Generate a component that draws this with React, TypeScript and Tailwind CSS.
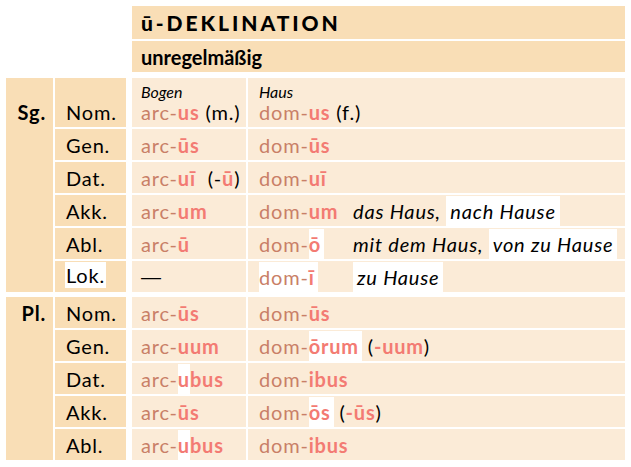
import React from 'react';

// colours from the reference
const hd = 'bg-[#f9deb6]';
const bd = 'bg-[#fbebd7]';

type Row = {
  c: string;
  a: React.ReactNode;
  b: React.ReactNode;
  g?: React.ReactNode;
};

const Stem = ({ s, e, hl }: { s: string; e: React.ReactNode; hl?: boolean }) => (
  <span>
    <span className="text-[#c97f67]">{s}</span>
    <span className={`font-bold text-[#f37b73] ${hl ? 'bg-white pr-[3px] py-[3px]' : ''}`}>{e}</span>
  </span>
);

const W = ({ children }: { children: React.ReactNode }) => <span className="bg-white px-[4px] py-[3px]">{children}</span>;
const Red = ({ children }: { children: React.ReactNode }) => <span className="font-bold text-[#f37b73]">{children}</span>;

const sg: Row[] = [
  { c: 'Nom.', a: <><Stem s="arc-" e="us" /> (m.)</>, b: <><Stem s="dom-" e="us" /> (f.)</> },
  { c: 'Gen.', a: <Stem s="arc-" e="ūs" />, b: <Stem s="dom-" e="ūs" /> },
  { c: 'Dat.', a: <><Stem s="arc-" e="uī" />&nbsp; (-<Red>ū</Red>)</>, b: <Stem s="dom-" e="uī" /> },
  { c: 'Akk.', a: <Stem s="arc-" e="um" />, b: <Stem s="dom-" e="um" />, g: <>das Haus, <W>nach Hause</W></> },
  { c: 'Abl.', a: <Stem s="arc-" e="ū" />, b: <Stem s="dom-" e="ō" hl />, g: <>mit dem Haus, <W>von zu Hause</W></> },
  { c: 'Lok.', a: <span className="font-['Liberation_Sans',sans-serif] tracking-normal">—</span>, b: <span className="bg-white py-[3px]"><Stem s="dom-" e="ī" hl /></span>, g: <W>zu Hause</W> },
];

const pl: Row[] = [
  { c: 'Nom.', a: <Stem s="arc-" e="ūs" />, b: <Stem s="dom-" e="ūs" /> },
  { c: 'Gen.', a: <Stem s="arc-" e="uum" />, b: <><Stem s="dom-" e="ōrum" hl /> (<Red>-uum</Red>)</> },
  { c: 'Dat.', a: <Stem s="arc-" e={<><span className="bg-white py-[3px]">u</span>bus</>} />, b: <Stem s="dom-" e="ibus" /> },
  { c: 'Akk.', a: <Stem s="arc-" e="ūs" />, b: <><Stem s="dom-" e="ōs" hl /> (<Red>-ūs</Red>)</> },
  { c: 'Abl.', a: <Stem s="arc-" e={<><span className="bg-white py-[3px]">u</span>bus</>} />, b: <Stem s="dom-" e="ibus" /> },
];

const Line = ({ r, first }: { r: Row; first?: boolean }) => (
  <div className={`flex ${first ? 'h-[49px]' : 'h-[31px]'}`}>
    <div className={`w-[71px] ${hd} pl-[11px] flex items-end pb-[4px]`}>
      {r.c === 'Lok.' ? <span className="bg-white px-[1px] py-[2px] -ml-[1px]">{r.c}</span> : r.c}
    </div>
    <div className={`ml-[6px] w-[114px] ${bd} pl-[9px] flex flex-col justify-end pb-[4px] whitespace-nowrap`}>
      {first && <span className="italic text-[16px] leading-[18px] tracking-normal">Bogen</span>}
      <div>{r.a}</div>
    </div>
    <div className={`ml-[2px] flex-1 ${bd} pl-[11px] flex flex-col justify-end pb-[4px] whitespace-nowrap`}>
      {first && <span className="italic text-[16px] leading-[18px] tracking-normal">Haus</span>}
      <div className="flex">
        <div className="w-[94px]">{r.b}</div>
        {r.g && <div className="italic">{r.g}</div>}
      </div>
    </div>
  </div>
);

const Group = ({ label, rows, top }: { label: string; rows: Row[]; top: string }) => (
  <div className="flex">
    <div className={`w-[47px] ${hd} text-right pr-[7px] font-bold ${top}`}>{label}</div>
    <div className="ml-[2px] flex-1 flex flex-col gap-[2px]">
      {rows.map((r, i) => (
        <Line key={i} r={r} first={label === 'Sg.' && i === 0} />
      ))}
    </div>
  </div>
);

export default function App() {
  return (
    <div className="w-[631px] h-[467px] bg-white text-black font-['Lato',sans-serif] text-[20px] leading-[22px] tracking-[0.04em] overflow-hidden">
      <div className="ml-[132px] w-[493px] mt-[6px] flex flex-col gap-[2px]">
        <div className={`h-[33px] ${hd} pl-[9px] flex items-center pt-[1px] font-black text-[21px] tracking-[0.14em]`}>ū-DEKLINATION</div>
        <div className={`h-[31px] ${hd} pl-[9px] flex items-center font-bold tracking-normal`}>unregelmäßig</div>
      </div>
      <div className="ml-[6px] w-[619px] mt-[6px] flex flex-col gap-[5px]">
        <Group label="Sg." rows={sg} top="pt-[23px]" />
        <Group label="Pl." rows={pl} top="pt-[5px]" />
      </div>
    </div>
  );
}
